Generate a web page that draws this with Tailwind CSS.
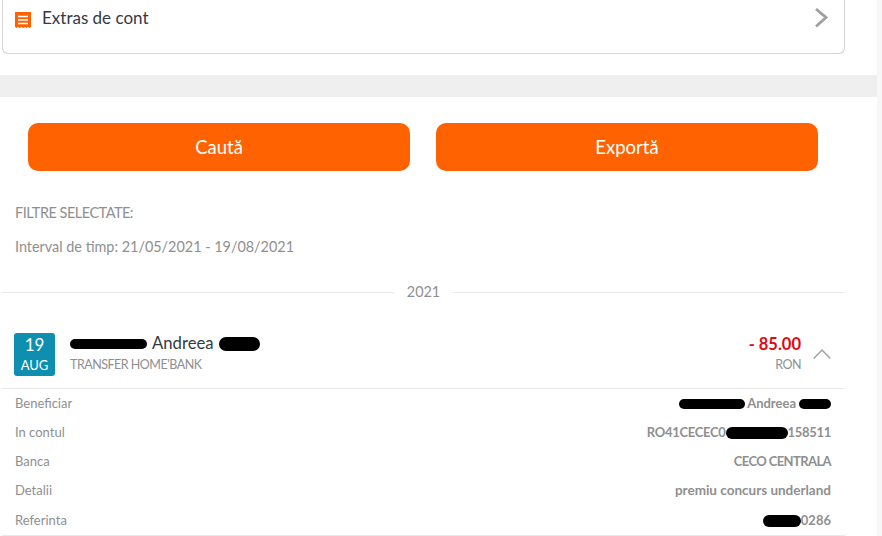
<!DOCTYPE html>
<html>
<head>
<meta charset="utf-8">
<script src="https://cdn.jsdelivr.net/npm/@tailwindcss/browser@4"></script>
</head>
<body class="bg-white">
<div class="w-[882px] h-[536px] overflow-hidden flex font-['Lato','Liberation_Sans',sans-serif]">
  <main class="w-[877px] shrink-0 bg-white">
    <section class="h-[75px] pl-[2px] pr-[32px]">
      <div class="h-[54px] border border-t-0 border-[#d4d4d4] rounded-b-[6px] flex items-start pl-[12px] pr-[16px]">
        <svg class="w-[16px] h-[16px] mt-[12px]" viewBox="0 0 16 16"><path d="M0 0H16V15L14.500 16 13 15 11.500 16 10 15 8 16 6 15 4.500 16 3 15 1.500 16 0 15Z" fill="#ff6200"/><path d="M3 4.500H13M3 8H13M3 11.500H13" stroke="#fff" stroke-width="1.300"/></svg>
        <span class="ml-[11px] mt-[7px] text-[17px] leading-[22px] text-[#333a45]">Extras de cont</span>
        <svg class="ml-auto mt-[8px] w-[13px] h-[20px]" viewBox="0 0 13 20" fill="none"><path d="M1 1L11 9.500L1 18.500" stroke="#a0a0a0" stroke-width="2.800"/></svg>
      </div>
    </section>
    <div class="h-[22px] bg-[#efefef]"></div>
    <section class="flex gap-[26px] pl-[28px] pt-[26px]">
      <button class="w-[382px] h-[48px] pt-[1px] rounded-[10px] bg-[#ff6200] text-white text-[18.500px]">Caută</button>
      <button class="w-[382px] h-[48px] pt-[1px] rounded-[10px] bg-[#ff6200] text-white text-[18.500px]">Exportă</button>
    </section>
    <section class="pl-[15px] pt-[32px] text-[14.400px] leading-[20px] text-[#8f8f8f]">
      <p class="text-[14.500px] tracking-[-0.5px]">FILTRE SELECTATE:</p>
      <p class="mt-[14px]">Interval de timp: 21/05/2021 - 19/08/2021</p>
    </section>
    <div class="w-[843px] ml-[2px] mt-[25px] flex items-center text-[14.400px] leading-[20px] text-[#8f8f8f]">
      <div class="w-[392px] h-px bg-[#e8e8e8]"></div>
      <span class="w-[59px] text-center">2021</span>
      <div class="flex-1 h-px bg-[#e8e8e8]"></div>
    </div>
    <section class="w-[843px] ml-[2px] mt-[31px] h-[56px] border-b border-[#e8e8e8] flex items-start">
      <div class="ml-[12px] w-[41px] h-[43px] rounded-[3px] bg-[#0f8fb0] text-white text-center flex flex-col items-center">
        <span class="text-[17px] leading-[22px] mt-[1px]">19</span>
        <span class="text-[13px] leading-[18px]">AUG</span>
      </div>
      <div class="ml-[15px] mt-[1px]">
        <div class="flex items-center h-[20px] text-[16.700px] text-[#333a45]">
          <span class="w-[77px] h-[10px] rounded-full bg-black"></span>
          <span class="ml-[5px]">Andreea</span>
          <span class="ml-[5px] w-[41px] h-[14px] rounded-full bg-black"></span>
        </div>
        <p class="text-[12.500px] leading-[18px] mt-[2px] tracking-[-0.5px] text-[#8f8f8f]">TRANSFER HOME'BANK</p>
      </div>
      <div class="ml-auto text-right mt-[1px]">
        <p class="text-[16.500px] leading-[20px] font-bold text-[#e30613]">- 85.00</p>
        <p class="text-[12.500px] leading-[18px] mt-[2px] tracking-[-0.5px] text-[#8f8f8f]">RON</p>
      </div>
      <svg class="ml-[12px] mr-[14px] mt-[15px] w-[18px] h-[12px]" viewBox="0 0 18 12" fill="none"><path d="M0.700 10.500L9 2L17.300 10.500" stroke="#a0a0a0" stroke-width="1.500"/></svg>
    </section>
    <section class="w-[843px] ml-[2px] pl-[13px] pr-[14px] text-[13px] text-[#8f8f8f] border-b border-[#e8e8e8]">
      <div class="h-[29px] flex justify-between items-center">
        <span>Beneficiar</span>
        <span class="flex items-center font-bold"><span class="w-[66px] h-[10px] rounded-full bg-black"></span><span class="ml-[2px]">Andreea</span><span class="ml-[3px] w-[32px] h-[10px] rounded-full bg-black"></span></span>
      </div>
      <div class="h-[29px] flex justify-between items-center">
        <span>In contul</span>
        <span class="flex items-center font-bold tracking-[-0.3px]">RO41CECEC0<span class="w-[62px] h-[12px] rounded-full bg-black"></span>158511</span>
      </div>
      <div class="h-[29px] flex justify-between items-center">
        <span>Banca</span>
        <span class="font-bold tracking-[-0.6px]">CECO CENTRALA</span>
      </div>
      <div class="h-[29px] flex justify-between items-center">
        <span>Detalii</span>
        <span class="font-bold text-[13.500px]">premiu concurs underland</span>
      </div>
      <div class="h-[30px] pt-[1px] flex justify-between items-center">
        <span>Referinta</span>
        <span class="flex items-center font-bold"><span class="w-[38px] h-[12px] rounded-full bg-black"></span>0286</span>
      </div>
    </section>
  </main>
  <div class="flex-1 bg-[#f7f7f7]"></div>
</div>
</body>
</html>
